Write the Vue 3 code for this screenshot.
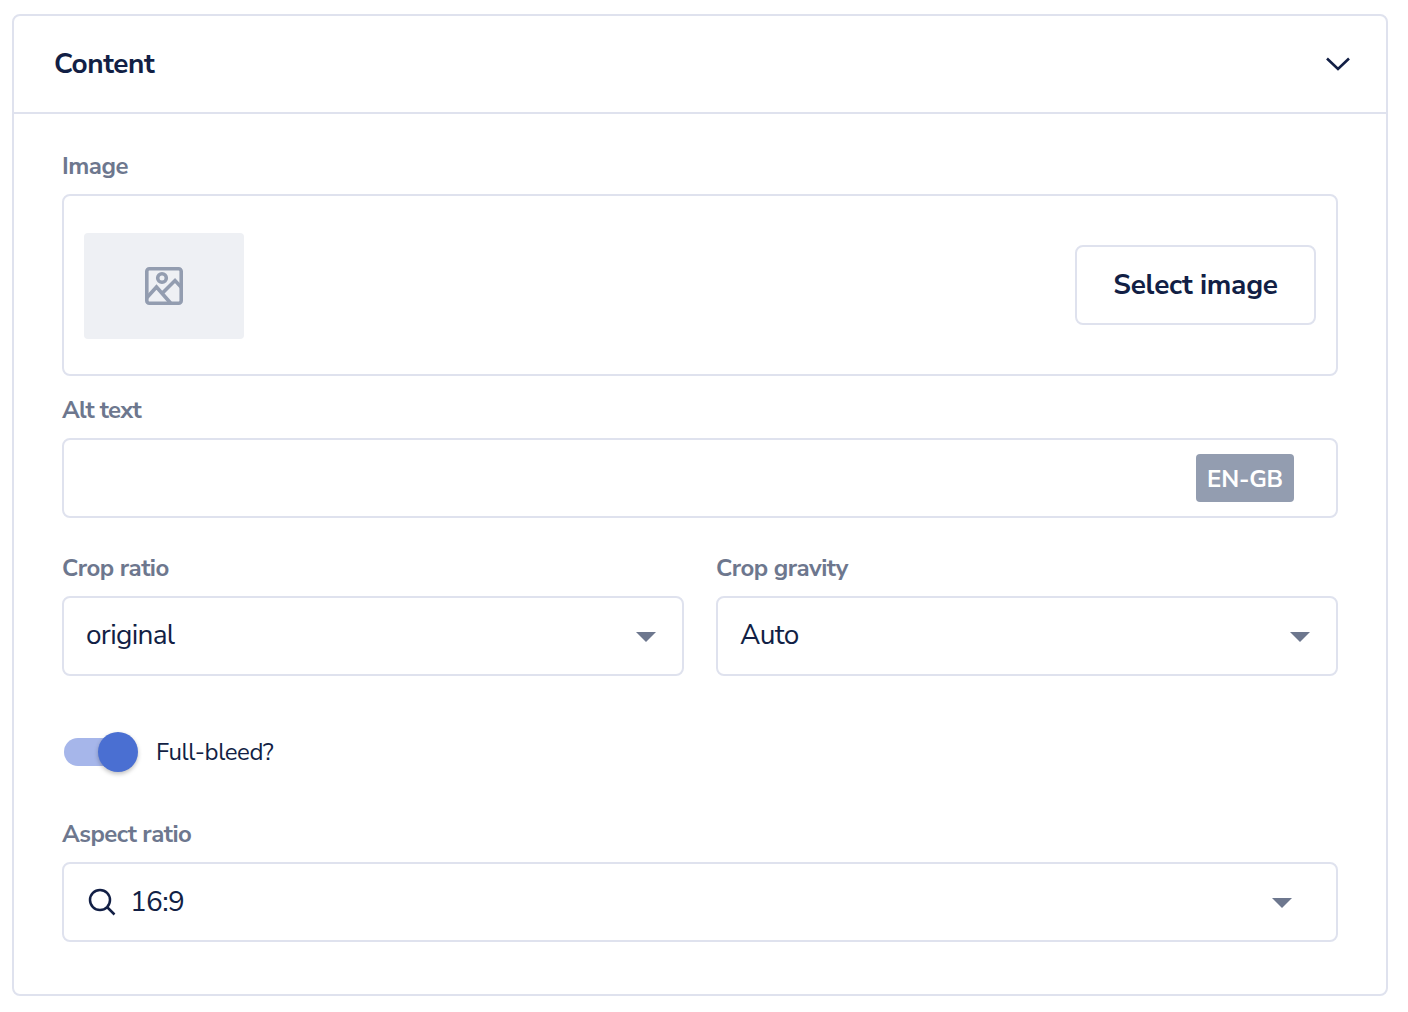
<script setup>
const cropFields = [
  { label: 'Crop ratio', value: 'original' },
  { label: 'Crop gravity', value: 'Auto' }
]
</script>

<template>
  <div class="page">
    <section class="card">
      <header class="card-head">
        <h2>Content</h2>
        <svg class="chevron" width="24" height="14" viewBox="0 0 24 14" fill="none">
          <path d="M1 1.500 12 12 23 1.500" stroke="#121f45" stroke-width="2.600" />
        </svg>
      </header>
      <div class="card-body">
        <label class="label">Image</label>
        <div class="image-box">
          <div class="thumb">
            <svg width="38" height="38" viewBox="0 0 38 38" fill="none" stroke="#939db0" stroke-width="3.600">
              <rect x="1.800" y="1.800" width="34.400" height="34.400" rx="2.500" />
              <circle cx="17" cy="11" r="4.300" />
              <path d="M2 30.500 11.500 20 25.500 36M18 25.500 30 13.500 37 21" />
            </svg>
          </div>
          <button class="btn">Select image</button>
        </div>
        <label class="label alt">Alt text</label>
        <div class="field alt-field"><span class="badge">EN-GB</span></div>
        <div class="crop-row">
          <div v-for="f in cropFields" :key="f.label" class="crop-col">
            <label class="label">{{ f.label }}</label>
            <div class="field select"><span class="value">{{ f.value }}</span><i class="caret"></i></div>
          </div>
        </div>
        <div class="toggle-row">
          <div class="toggle"><span class="track"></span><span class="knob"></span></div>
          <span class="toggle-label">Full-bleed?</span>
        </div>
        <label class="label aspect-label">Aspect ratio</label>
        <div class="field select aspect">
          <svg class="search" width="28" height="28" viewBox="0 0 28 28" fill="none" stroke="#121f45" stroke-width="2.500">
            <circle cx="12" cy="12" r="10" />
            <path d="M19.500 19.500 26.500 26.500" />
          </svg>
          <span class="value">16:9</span>
          <i class="caret"></i>
        </div>
      </div>
    </section>
  </div>
</template>

<style scoped>
.page {
  padding: 14px 20px 16px 12px;
  font-family: "Nunito Sans", Lato, "Noto Sans", sans-serif;
  color: #121f45;
}
.card {
  border: 2px solid #dfe2ee;
  border-radius: 8px;
  height: 982px;
  box-sizing: border-box;
}
.card-head {
  height: 96px;
  border-bottom: 2px solid #dfe2ee;
  display: flex;
  align-items: center;
  justify-content: space-between;
  padding: 0 36px 0 40px;
}
.card-head h2 {
  margin: 0;
  font-size: 28px;
  font-weight: 700;
  letter-spacing: -0.45px;
}
.chevron { display: block; }
.card-body {
  padding: 24px 48px 0;
  display: flex;
  flex-direction: column;
}
.label {
  display: block;
  height: 56px;
  line-height: 56px;
  font-size: 24px;
  font-weight: 700;
  letter-spacing: -0.5px;
  color: #6d778e;
}
.image-box {
  height: 182px;
  box-sizing: border-box;
  border: 2px solid #dfe2ee;
  border-radius: 8px;
  display: flex;
  align-items: center;
  justify-content: space-between;
  padding: 0 20px;
}
.thumb {
  width: 160px;
  height: 106px;
  margin-top: 2px;
  background: #eef0f4;
  border-radius: 4px;
  display: flex;
  align-items: center;
  justify-content: center;
}
.btn {
  width: 241px;
  height: 80px;
  box-sizing: border-box;
  background: #fff;
  border: 2px solid #dfe2ee;
  border-radius: 8px;
  font: 700 28px "Nunito Sans", Lato, "Noto Sans", sans-serif;
  letter-spacing: -0.25px;
  color: #121f45;
  padding: 0;
}
.label.alt {
  height: 62px;
  line-height: 68px;
  letter-spacing: -0.8px;
}
.field {
  height: 80px;
  box-sizing: border-box;
  border: 2px solid #dfe2ee;
  border-radius: 8px;
  display: flex;
  align-items: center;
  position: relative;
}
.alt-field {
  justify-content: flex-end;
  padding-right: 42px;
}
.badge {
  width: 98px;
  height: 48px;
  padding-top: 2px;
  box-sizing: border-box;
  background: #939db0;
  border-radius: 4px;
  color: #fff;
  font-size: 24px;
  font-weight: 700;
  letter-spacing: -0.2px;
  display: flex;
  align-items: center;
  justify-content: center;
}
.crop-row {
  display: grid;
  grid-template-columns: 1fr 1fr;
  column-gap: 32px;
  margin-top: 22px;
}
.select {
  font-size: 28px;
  padding: 0 23px 0 22px;
  justify-content: space-between;
}
.value {
  letter-spacing: -0.7px;
  margin-top: -2px;
}
.caret {
  width: 0;
  height: 0;
  border-left: 10px solid transparent;
  border-right: 10px solid transparent;
  border-top: 10px solid #6d778e;
  margin-right: 3px;
  margin-top: 1px;
}
.toggle-row {
  display: flex;
  align-items: center;
  margin-top: 56px;
  height: 40px;
}
.toggle {
  position: relative;
  width: 76px;
  height: 40px;
}
.track {
  position: absolute;
  left: 2px;
  top: 6px;
  width: 64px;
  height: 28px;
  border-radius: 14px;
  background: #a6b6ea;
}
.knob {
  position: absolute;
  left: 36px;
  top: 0;
  width: 40px;
  height: 40px;
  border-radius: 50%;
  background: #4a6fd2;
  box-shadow: 0 2px 4px rgba(0, 0, 0, .25);
}
.toggle-label {
  margin-left: 18px;
  font-size: 24px;
  letter-spacing: -0.4px;
}
.aspect-label { margin-top: 34px; }
.aspect {
  justify-content: flex-start;
  padding-left: 24px;
}
.aspect .value {
  margin-left: 14px;
  margin-top: 0;
}
.aspect .caret { margin-left: auto; margin-right: 21px; }
.search { display: block; }
</style>

<style>
html, body { background: #fff; }
</style>
